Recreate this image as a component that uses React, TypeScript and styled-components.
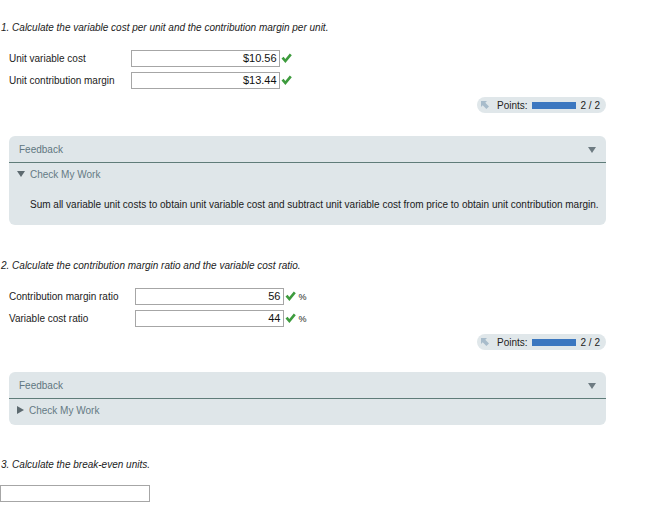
import React from 'react';
import styled, { createGlobalStyle } from 'styled-components';

const GlobalStyle = createGlobalStyle`
  html, body {
    margin: 0;
    padding: 0;
    background: #ffffff;
  }
  body {
    font-family: "Liberation Sans", Arial, sans-serif;
    color: #1a1a1a;
  }
`;

const Page = styled.div`
  width: 606px;
  padding-bottom: 6px;
`;

const Heading = styled.div<{ $top: number }>`
  margin: ${(p) => p.$top}px 0 0 1px;
  font-size: 10px;
  line-height: 12px;
  font-style: italic;
  color: #222;
`;

const FieldTable = styled.div<{ $top: number }>`
  margin-top: ${(p) => p.$top}px;
  padding-left: 9px;
  display: grid;
  grid-template-columns: auto auto;
  column-gap: 16px;
  row-gap: 5px;
  justify-content: start;
`;

const Label = styled.div`
  font-size: 10px;
  line-height: 17px;
  color: #222;
`;

const Answer = styled.div`
  display: flex;
  align-items: center;
  gap: 1px;
`;

const Box = styled.div<{ $width?: number }>`
  box-sizing: border-box;
  width: ${(p) => p.$width ?? 149}px;
  height: 17px;
  border: 1px solid #a6a6a6;
  background: #fff;
  font-size: 11px;
  line-height: 15px;
  text-align: right;
  padding-right: 2px;
  color: #111;
`;

const Unit = styled.span`
  font-size: 9px;
  margin-left: 2px;
  color: #222;
`;

const PointsRow = styled.div<{ $top: number }>`
  margin-top: ${(p) => p.$top}px;
  display: flex;
  justify-content: flex-end;
`;

const Badge = styled.div`
  display: flex;
  align-items: center;
  height: 16px;
  width: 129px;
  box-sizing: border-box;
  padding: 0 6px 0 4px;
  background: #e0e7ea;
  border-radius: 8px;
  font-size: 10px;
  color: #222;
`;

const BadgeText = styled.span`
  margin-left: 8px;
`;

const Bar = styled.div`
  width: 44px;
  height: 7px;
  margin-left: 4px;
  background: #3b77c0;
`;

const Score = styled.span`
  margin-left: auto;
`;

const Panel = styled.div<{ $top: number }>`
  margin: ${(p) => p.$top}px 0 0 9px;
  background: #dfe6e9;
  border-radius: 6px;
  overflow: hidden;
`;

const PanelHead = styled.div`
  height: 26px;
  display: flex;
  align-items: center;
  justify-content: space-between;
  padding: 0 10px 0 10px;
  border-bottom: 1px solid #5f7c79;
  font-size: 10px;
  color: #5f7680;
`;

const Caret = styled.span`
  width: 0;
  height: 0;
  border-left: 4px solid transparent;
  border-right: 4px solid transparent;
  border-top: 6px solid #6e7b82;
  margin-top: 2px;
`;

const Toggle = styled.div`
  display: flex;
  align-items: center;
  gap: 5px;
  padding: 5px 0 0 8px;
  height: 12px;
  font-size: 10px;
  color: #657a84;
`;

const Arrow = styled.span<{ $open: boolean }>`
  width: 0;
  height: 0;
  ${(p) =>
    p.$open
      ? `border-left: 4px solid transparent;
         border-right: 4px solid transparent;
         border-top: 6px solid #5d6a70;`
      : `border-top: 4px solid transparent;
         border-bottom: 4px solid transparent;
         border-left: 7px solid #5d6a70;`}
`;

const Hint = styled.div`
  padding: 19px 0 14px 21px;
  font-size: 10px;
  line-height: 12px;
  color: #1a1a1a;
  white-space: nowrap;
`;

const Spacer = styled.div<{ $h: number }>`
  height: ${(p) => p.$h}px;
`;

const Blank = styled.div<{ $top: number }>`
  margin-top: ${(p) => p.$top}px;
  box-sizing: border-box;
  width: 150px;
  height: 17px;
  border: 1px solid #a6a6a6;
`;

function Check() {
  return (
    <svg width="11" height="11" viewBox="0 0 11 11">
      <path d="M0.5 5.6 L2.6 3.8 L4.3 5.9 L8.8 0.5 L10.8 2.2 L4.4 10 Z" fill="#3d9b3d" />
    </svg>
  );
}

function PointsIcon() {
  return (
    <svg width="8" height="8" viewBox="0 0 8 8">
      <path d="M0 0 H6 L4.3 1.7 L8 5.4 L5.4 8 L1.7 4.3 L0 6 Z" fill="#a8bccb" />
    </svg>
  );
}

function Points({ top }: { top: number }) {
  return (
    <PointsRow $top={top}>
      <Badge>
        <PointsIcon />
        <BadgeText>Points:</BadgeText>
        <Bar />
        <Score>2 / 2</Score>
      </Badge>
    </PointsRow>
  );
}

type Field = { label: string; value: string; unit?: string };

function Fields({ top, fields }: { top: number; fields: Field[] }) {
  return (
    <FieldTable $top={top}>
      {fields.map((f) => (
        <React.Fragment key={f.label}>
          <Label>{f.label}</Label>
          <Answer>
            <Box>{f.value}</Box>
            <Check />
            {f.unit && <Unit>{f.unit}</Unit>}
          </Answer>
        </React.Fragment>
      ))}
    </FieldTable>
  );
}

export default function App() {
  return (
    <Page>
      <GlobalStyle />
      <Heading $top={22}>
        1. Calculate the variable cost per unit and the contribution margin per unit.
      </Heading>
      <Fields
        top={16}
        fields={[
          { label: 'Unit variable cost', value: '$10.56' },
          { label: 'Unit contribution margin', value: '$13.44' },
        ]}
      />
      <Points top={8} />
      <Panel $top={23}>
        <PanelHead>
          <span>Feedback</span>
          <Caret />
        </PanelHead>
        <Toggle>
          <Arrow $open />
          <span>Check My Work</span>
        </Toggle>
        <Hint>
          Sum all variable unit costs to obtain unit variable cost and subtract unit variable
          cost from price to obtain unit contribution margin.
        </Hint>
      </Panel>

      <Heading $top={35}>2. Calculate the contribution margin ratio and the variable cost ratio.</Heading>
      <Fields
        top={16}
        fields={[
          { label: 'Contribution margin ratio', value: '56', unit: '%' },
          { label: 'Variable cost ratio', value: '44', unit: '%' },
        ]}
      />
      <Points top={7} />
      <Panel $top={22}>
        <PanelHead>
          <span>Feedback</span>
          <Caret />
        </PanelHead>
        <Toggle>
          <Arrow $open={false} />
          <span>Check My Work</span>
        </Toggle>
        <Spacer $h={9} />
      </Panel>

      <Heading $top={34}>3. Calculate the break-even units.</Heading>
      <Blank $top={14} />
    </Page>
  );
}
